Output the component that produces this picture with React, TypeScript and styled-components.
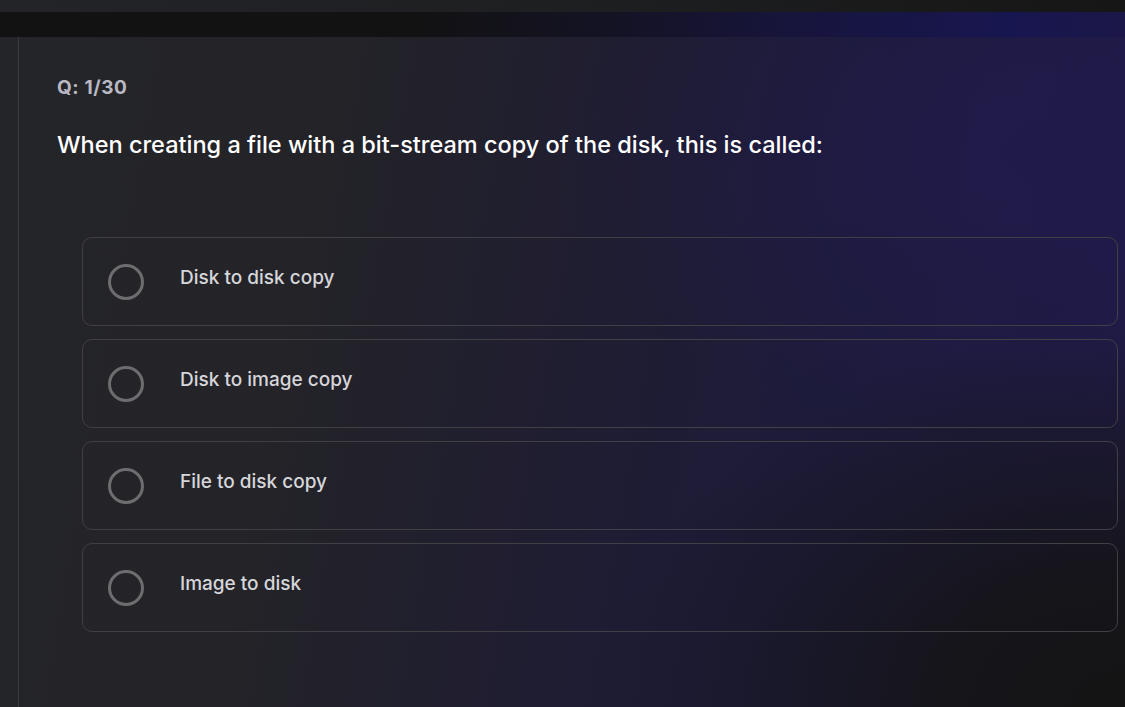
import React from "react";
import styled, { createGlobalStyle } from "styled-components";

const Global = createGlobalStyle`
  html, body { margin: 0; padding: 0; background: #141414; }
  body { font-family: "Inter", "Lato", sans-serif; width: 1125px; height: 707px; overflow: hidden; }
  #root { height: 707px; }
`;

const Page = styled.div`
  display: flex;
  flex-direction: column;
  width: 1125px;
  height: 707px;
  background:
    radial-gradient(ellipse 520px 380px at 1125px 707px, rgba(20, 20, 20, 1) 0%, rgba(20, 20, 20, 0.85) 35%, rgba(20, 20, 20, 0) 100%),
    radial-gradient(ellipse 500px 300px at 1050px 150px, rgba(34, 26, 84, 0.55), rgba(34, 26, 84, 0) 100%),
    linear-gradient(100deg, #242529 0%, #232328 28%, #1f1d31 52%, #1d1b3b 72%, #1f1a44 100%);
`;

const TopStrip = styled.div`
  height: 12px;
  background: linear-gradient(90deg, #232428 0%, #1e1f21 50%, #161616 100%);
  flex: none;
`;

const HeaderBand = styled.div`
  height: 25px;
  flex: none;
  background: linear-gradient(90deg, #121212 0%, #121212 36%, #141325 55%, #17153e 72%, #181650 90%, #1b1748 100%);
`;

const Body = styled.div`
  flex: 1;
  display: flex;
`;

const Rail = styled.div`
  width: 18px;
  flex: none;
  border-right: 1px solid #3a3b40;
`;

const Content = styled.main`
  flex: 1;
  padding: 40px 7px 0 38px;
  display: flex;
  flex-direction: column;
`;

const Counter = styled.div`
  font-size: 19px;
  font-weight: 700;
  color: #b9b9c3;
  line-height: 22px;
  letter-spacing: 0.6px;
`;

const Question = styled.h1`
  margin: 31px 0 0;
  font-size: 23.5px;
  font-weight: 500;
  color: #ffffff;
  line-height: 30px;
`;

const Options = styled.div`
  margin: 77px 0 0 25px;
  display: flex;
  flex-direction: column;
  gap: 13px;
`;

const Option = styled.label`
  height: 89px;
  box-sizing: border-box;
  border: 1px solid #403f44;
  border-radius: 10px;
  display: flex;
  align-items: center;
  padding-left: 25px;
  cursor: pointer;
`;

const Radio = styled.span`
  width: 36px;
  height: 36px;
  box-sizing: border-box;
  border-radius: 50%;
  border: 3px solid #6d6d70;
  flex: none;
`;

const OptionText = styled.span`
  margin-left: 36px;
  margin-top: -8px;
  font-size: 19px;
  font-weight: 500;
  color: #d6d6da;
`;

const answers = ["Disk to disk copy", "Disk to image copy", "File to disk copy", "Image to disk"];

export default function App() {
  return (
    <>
      <Global />
      <Page>
        <TopStrip />
        <HeaderBand />
        <Body>
          <Rail />
          <Content>
            <Counter>Q: 1/30</Counter>
            <Question>When creating a file with a bit-stream copy of the disk, this is called:</Question>
            <Options>
              {answers.map((a) => (
                <Option key={a}>
                  <Radio />
                  <OptionText>{a}</OptionText>
                </Option>
              ))}
            </Options>
          </Content>
        </Body>
      </Page>
    </>
  );
}
